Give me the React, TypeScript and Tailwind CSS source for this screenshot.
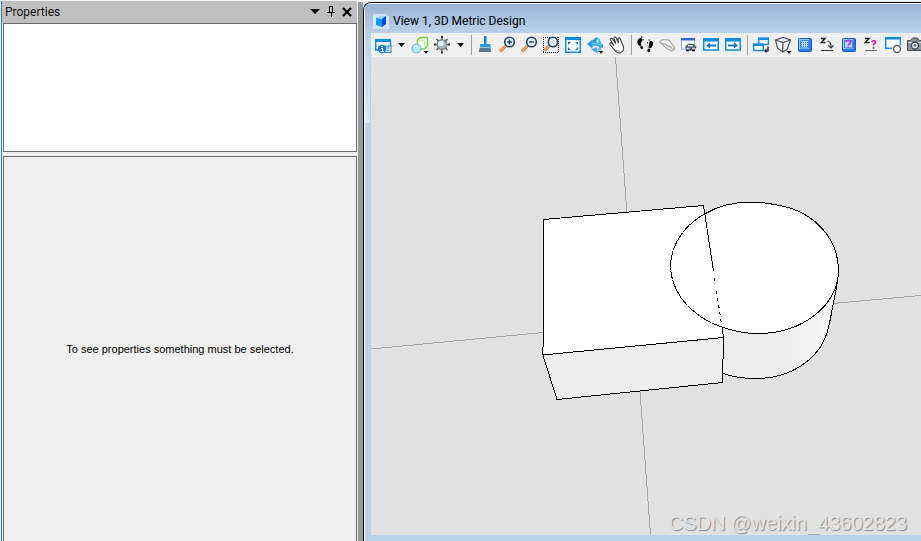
import React from 'react';

interface IconButtonProps {
  label: string;
  children: React.ReactNode;
}

const BLUE = '#0a8ce0';

const IconButton: React.FC<IconButtonProps> = ({ label, children }) => (
  <button type="button" aria-label={label} title={label} className="flex h-6 w-[22px] shrink-0 items-center justify-center">
    <svg width="18" height="18" viewBox="0 0 18 18" fill="none">
      {children}
    </svg>
  </button>
);

const DropButton: React.FC<{ label: string }> = ({ label }) => (
  <button type="button" aria-label={label} className="flex h-6 w-[15px] shrink-0 items-center justify-center">
    <svg width="7" height="4" viewBox="0 0 7 4">
      <path d="M0 0h7L3.500 4z" fill="#000" />
    </svg>
  </button>
);

const Separator = () => (
  <div className="flex h-6 w-1.5 shrink-0 items-center justify-center">
    <div className="h-5 w-px bg-[#a0a0a0]" />
  </div>
);

const CornerArrow = () => <path d="M12.500 15h5L15 17.700z" fill="#000" />;

const Lens: React.FC<{ cx: number; cy: number }> = ({ cx, cy }) => (
  <>
    <path d={`M${cx - 4} ${cy + 4}L${cx - 9.5} ${cy + 9.5}`} stroke="#c9752c" strokeWidth="3" />
    <path d={`M${cx - 4} ${cy + 4}L${cx - 9.5} ${cy + 9.5}`} stroke="#f9ae62" strokeWidth="1.500" />
    <circle cx={cx} cy={cy} r="4.800" fill="#e2f1fa" stroke="#1d4562" strokeWidth="1.600" />
  </>
);

const WindowFrame = () => (
  <>
    <rect x="1.750" y="3" width="14.500" height="11" fill="#fff" stroke={BLUE} strokeWidth="1.500" />
    <path d="M1 2h16v3.500H1z" fill={BLUE} />
  </>
);

const BlueTile = () => (
  <>
    <rect x="2.500" y="2.500" width="13" height="13" rx="1" fill="#2f7de8" stroke="#1a56cf" />
    <path d="M3 3h10v10H3z" fill="#8fd0fb" />
    <path d="M4.500 4.500h8v7.500h-8z" fill="#b4e0fc" stroke="#3c86e6" />
  </>
);

const ViewToolbar = () => (
  <div role="toolbar" aria-label="View tools" className="flex h-6 items-center overflow-hidden bg-[#f0f0f0] pl-px">
    <IconButton label="View Attributes">
      <path d="M1 3h16v3H1z" fill={BLUE} />
      <path d="M2.500 6h13v7h-13z" fill="#f8f8f8" />
      <path d="M1.700 5v9H4M16.500 5v5" stroke={BLUE} strokeWidth="1.400" />
      <rect x="10.500" y="10" width="6.500" height="6.500" fill="#e5f4ff" stroke="#1a86d2" />
      <path d="M12.500 12h3M12.500 14.300h3" stroke="#1a86d2" />
      <circle cx="8" cy="13" r="4.200" fill="#147cc9" />
      <path d="M7 10.500h2M7 12.500h1.500v3M6.500 15.500h3.500" stroke="#fff" strokeWidth="1.200" />
    </IconButton>
    <DropButton label="View Attributes options" />
    <IconButton label="Display Style">
      <path d="M6.500 4l3-2.500h7v8.500l-3 3h-7z" fill="#f4fbee" stroke="#80c83c" strokeWidth="1.400" />
      <path d="M7.500 4.500h6M13.500 12.500V4.500" stroke="#cdebb1" strokeWidth="1.200" />
      <circle cx="5.500" cy="12.500" r="4.500" fill="#b9e8fa" stroke="#56b5dd" />
      <circle cx="4.500" cy="11" r="1.800" fill="#eefaff" />
      <CornerArrow />
    </IconButton>
    <IconButton label="Adjust View Brightness">
      <path d="M9 0v17M1 8.500h16M3.500 3l11 11M14.500 3l-11 11" stroke="#4b4f52" strokeWidth="1.200" />
      <circle cx="9" cy="8.500" r="4.900" fill="#a9bdc5" stroke="#747e83" strokeWidth="1.200" />
      <circle cx="8" cy="7.500" r="2.600" fill="#e4f7fb" />
      <path d="M8 15.500h2v2H8zM8 0h2v2H8zM1 7.500h2v2H1zM15 7.500h2v2h-2z" fill="#303234" />
    </IconButton>
    <DropButton label="Brightness options" />
    <Separator />
    <IconButton label="Update View">
      <path d="M8 0h2.500v8H8z" fill="#1b83cf" />
      <path d="M4 8h10.500v4H4z" fill="#279bdf" />
      <path d="M4 11h10.500l.5 5H2.500z" fill="#55798e" />
      <path d="M4 11.500h10" stroke="#9bc6dd" />
    </IconButton>
    <IconButton label="Zoom In">
      <Lens cx={11.5} cy={6} />
      <path d="M9 6h5M11.500 3.500v5" stroke="#1d4562" strokeWidth="1.400" />
    </IconButton>
    <IconButton label="Zoom Out">
      <Lens cx={11.5} cy={6} />
      <path d="M9 6h5" stroke="#1d4562" strokeWidth="1.400" />
    </IconButton>
    <IconButton label="Window Area">
      <path d="M1.500 1v16M16.500 1v16M1 1.500h16M1 16.500h16" stroke="#000" strokeDasharray="1 1" />
      <path d="M7.500 9.500L2.500 14.500" stroke="#c9752c" strokeWidth="3" />
      <path d="M7.500 9.500L2.500 14.500" stroke="#f9ae62" strokeWidth="1.500" />
      <circle cx="11" cy="6" r="4.700" fill="#e2f1fa" stroke="#1d4562" strokeWidth="1.600" />
    </IconButton>
    <IconButton label="Fit View">
      <rect x="1.750" y="1.750" width="14.500" height="14.500" fill="#f8fcff" stroke={BLUE} strokeWidth="1.500" />
      <path d="M1 1h16v3H1z" fill={BLUE} />
      <path d="M4 6h3L4 9zM14 6v3l-3-3zM4 14v-3l3 3zM14 14h-3l3-3z" fill="#2c78ae" />
    </IconButton>
    <IconButton label="Rotate View">
      <path d="M10 2.500c4.500 0 6 11 1 13" stroke="#56bdf3" strokeWidth="2.500" />
      <path d="M6 5l4.500-4v7z" fill="#2693dc" />
      <path d="M1 8l5.500-4.500v2.700c4 0 7 .3 10.500 2.300v3.500c-3-2-6.500-2.500-10.500-2.300v3z" fill="#1f9be6" />
      <path d="M5.500 7.800c4-.5 7 0 10 1.500" stroke="#9cdcfb" />
      <path d="M5 13.500l6-2.500v6z" fill="#3fb0ef" />
      <CornerArrow />
    </IconButton>
    <IconButton label="Pan View">
      <path d="M6.500 14L2 8.500c-.8-1.500 1-2.200 2-1l2 2L2.500 4c-.7-1.500 1.200-2.300 2-1L8 8 6 2.500c-.3-1.700 1.700-2 2.300-.5L10.500 7 10 3c0-1.500 2-1.500 2.300 0L15 9.500c.8 2 1.200 4-.3 5.700L12.500 17c-2 0-4.500-1-6-3z" fill="#fff" stroke="#3e3e3e" strokeWidth="1.100" />
      <path d="M8 14l4 1.500" stroke="#999" />
    </IconButton>
    <Separator />
    <IconButton label="Walk">
      <path d="M3 2.500c2-1.500 3.500 0 3 2L5 7.500l.5 2-2 .5C1 8 .500 4.500 3 2.500zM4 10.500l2.200-.500 1 2c-.5 1.500-2.200 1.500-2.700 0z" fill="#000" />
      <path d="M13.500 5.500c2-1.200 3.500 0 3.500 2 0 2-1 4-2.500 4.700l-2-.6.300-2.200zM12 12.500l2.300.6-.5 2.500c-1 1.500-2.800.5-2.500-1z" fill="#000" />
      <path d="M5 1h1.500M7 3v1.500M12.500 4H14M11.500 6v1.500" stroke="#000" />
    </IconButton>
    <IconButton label="Fly">
      <path d="M1.500 6L4 3.700 11 4l5 6.500.5 3-3 1.500-5-2.500z" fill="#dcdcdc" stroke="#9b9b9b" />
      <path d="M2 6.500l8 3 6 4" stroke="#a9a9a9" />
      <path d="M4.500 4.500l6 .3 4 5-5-1.500-6-2z" fill="#f4f4f4" />
    </IconButton>
    <IconButton label="Navigate View">
      <rect x="1.500" y="2.500" width="13" height="10.500" fill="#f8fbff" stroke="#8ba6e0" />
      <path d="M1 2h14v2.500H1z" fill="#2f66d2" />
      <path d="M5 11l3.500-3.500 5 .5 3 3-2 3.500H7z" fill="#4c555d" />
      <path d="M8 9.500l5 .5M6.500 12.500h3M12 12.500h3" stroke="#dce5ec" strokeWidth="1.400" />
      <path d="M6 14.500h3M12 14.500h3" stroke="#111" strokeWidth="1.500" />
    </IconButton>
    <IconButton label="View Previous">
      <WindowFrame />
      <path d="M4 9.500l4-3v2h6v2H8v2z" fill="#1676b8" />
    </IconButton>
    <IconButton label="View Next">
      <WindowFrame />
      <path d="M14 9.500l-4-3v2H4v2h6v2z" fill="#1676b8" />
    </IconButton>
    <Separator />
    <IconButton label="Copy View">
      <rect x="6.700" y="2.500" width="9.600" height="6" fill="#fff" stroke={BLUE} strokeWidth="1.400" />
      <path d="M6 1.500h11V4H6z" fill={BLUE} />
      <rect x="1.700" y="8.500" width="9.600" height="6" fill="#fff" stroke={BLUE} strokeWidth="1.400" />
      <path d="M1 7.500h11V10H1z" fill={BLUE} />
      <path d="M16 10.500V15h-2" stroke="#000" strokeWidth="1.200" />
      <path d="M14.500 12.500v4.500L12 14.700z" fill="#000" />
    </IconButton>
    <IconButton label="View Orientation">
      <path d="M1.500 4L9 1.500 16.500 4 13 13.500 8.500 16 3.500 12z" fill="#f1f1f1" stroke="#50555a" strokeWidth="1.300" />
      <path d="M1.500 4L9 6.500 16.500 4M9 6.500L8.500 16" stroke="#50555a" strokeWidth="1.300" />
      <CornerArrow />
    </IconButton>
    <IconButton label="Set Active Depth">
      <BlueTile />
      <path d="M5 6.500h7M5 8.500h7M5 10.500h7" stroke="#2a5fc4" strokeDasharray="1 1" />
    </IconButton>
    <IconButton label="Set Display Depth">
      <path d="M3 2.500h4L3.300 6.500H7.500" stroke="#222" strokeWidth="1.400" />
      <path d="M9.500 5c3 .5 3.500 3 3.500 5.500M10.500 9.500l2.500 2.500 2.500-2.500M3 14.500h12" stroke="#333" strokeWidth="1.200" />
    </IconButton>
    <IconButton label="Show Active Depth">
      <BlueTile />
      <path d="M6 6c.5-2.200 5.500-1.500 4.500.8-.5 1.300-2.200 1.200-2.200 2.700M8.300 10.500V12" stroke="#c22fd0" strokeWidth="1.700" />
    </IconButton>
    <IconButton label="Show Display Depth">
      <path d="M3 2.500h4L3.300 6.500H7.500" stroke="#222" strokeWidth="1.400" />
      <path d="M3 14.500h12" stroke="#666" />
      <path d="M9.800 6c.5-1.800 4.500-1.500 3.700.8-.4 1.200-2 1.200-2 2.700M11.500 11v1.700" stroke="#d119ae" strokeWidth="1.600" />
    </IconButton>
    <IconButton label="Clip Volume">
      <rect x="1.700" y="1.750" width="14.600" height="10.500" fill="#fff" stroke={BLUE} strokeWidth="1.400" />
      <path d="M1 1h16v2.500H1z" fill={BLUE} />
      <circle cx="13" cy="13" r="5" fill="#f0f0f0" />
      <circle cx="13" cy="13" r="3.500" fill="#fff" stroke="#555b60" strokeWidth="1.400" />
    </IconButton>
    <IconButton label="Saved Views">
      <path d="M1.500 4.500h3l2-2.500h5l2 2.500h3v10h-15z" fill="#8b949b" stroke="#42494f" />
      <path d="M2 6.500h14" stroke="#d4dade" />
      <circle cx="9" cy="9.500" r="3.500" fill="#dfe9f0" stroke="#3d4449" strokeWidth="1.300" />
      <circle cx="9" cy="9.500" r="1.400" fill="#6a7f8e" />
    </IconButton>
  </div>
);

// Drawn in window coordinates, the origin of the view is 371,57
const Scene = () => (
  <svg className="block" width="550" height="478" viewBox="371 57 550 478" fill="none" role="img" aria-label="Box and cylinder">
    <defs>
      <linearGradient id="side" x1="723" x2="838" y1="0" y2="0" gradientUnits="userSpaceOnUse">
        <stop offset="0" stopColor="#ececec" />
        <stop offset="0.400" stopColor="#ededed" />
        <stop offset="0.800" stopColor="#f3f3f3" />
        <stop offset="1" stopColor="#fbfbfb" />
      </linearGradient>
    </defs>
    <path d="M615.500 57L650.500 535M371 349L543 332.500M833 303.500L921 295.500" stroke="#a6a6a6" shapeRendering="crispEdges" />
    <path
      d="M838.500 272C838 282 836 290 834 300C831 315 830 323 827 333C818 360 790 378.500 757 378.500C744 378.500 732 377 723 373.500V320z"
      fill="url(#side)"
    />
    <path d="M543.500 219.500L703.500 205.500L723.500 337.500L543 355z" fill="#fff" />
    <path d="M543 355L723.500 337.500L722.500 382.500L557 399.500z" fill="#eee" />
    <ellipse cx="754.700" cy="268" rx="83.900" ry="65.400" transform="rotate(3 754.700 268)" fill="#fff" />
    <g stroke="#000" shapeRendering="crispEdges">
      <path d="M838.500 272C838 282 836 290 834 300C831 315 830 323 827 333C818 360 790 378.500 757 378.500C744 378.500 732 377 723 373.500" />
      <path d="M703.500 205.500L543.500 219.500V340L542.500 355L723.500 337.500L722.500 382.500L557 399.500L543 355.500" />
      <path d="M703.500 205.500L713.500 271" />
      <path d="M714 278V281M716.500 291L722 327" strokeDasharray="3 4" />
      <path d="M722 327L723.500 337.500" />
      <path d="M705 213.700C727 201 753 200 777 205C814 211 838 238 838.500 270C838 306 802 333.500 758 333.500C745 333.500 733 331 722 327" />
      <path d="M705 213.700C683 226 671 246 670.500 266C671 293 692 317 722 327" strokeDasharray="9 1" />
    </g>
  </svg>
);

const PropertiesPanel = () => (
  <aside className="flex w-[356px] shrink-0 flex-col border-l border-[#1c86d1] bg-[#f0f0f0]">
    <header className="flex h-[22px] shrink-0 items-center bg-[#bfbfbf] pr-0.5 pb-px pl-[3px]">
      <h2 className="flex-1 font-[Roboto,sans-serif] text-[12px] leading-4 text-[#111]">Properties</h2>
      <button type="button" aria-label="Window position" className="flex size-4 items-center justify-center">
        <svg width="10" height="5" viewBox="0 0 10 5">
          <path d="M0 0h10L5 5z" fill="#000" />
        </svg>
      </button>
      <button type="button" aria-label="Auto hide" className="flex size-4 items-center justify-center">
        <svg width="8" height="11" viewBox="0 0 8 11" fill="none" shapeRendering="crispEdges">
          <path d="M2.500 6V.500h3V6M0 6.500h8M4.500 7v4M5 1v5" stroke="#000" />
        </svg>
      </button>
      <button type="button" aria-label="Close" className="flex size-4 items-center justify-center">
        <svg width="10" height="10" viewBox="0 0 10 10" fill="none">
          <path d="M1 1l8 8M9 1L1 9" stroke="#000" strokeWidth="2.200" />
        </svg>
      </button>
    </header>
    <div className="ml-px h-[129px] shrink-0 border border-[#6b6b6b] bg-white" />
    <div className="mt-1 ml-px flex flex-1 items-center justify-center border border-b-0 border-[#6b6b6b] font-['Liberation_Sans',sans-serif] text-[11px] leading-4 text-black">
      <p>To see properties something must be selected.</p>
    </div>
  </aside>
);

const ViewWindow = () => (
  <main className="mt-px flex min-w-0 flex-1 flex-col overflow-hidden rounded-tl-lg border-t border-l border-black bg-[#b9d1ea]">
    <header className="flex h-[30px] shrink-0 items-center gap-1 border-t border-l border-white bg-linear-to-b from-[#98b3d3] to-[#b9d1ea] pt-1 pl-2">
      <svg width="16" height="16" viewBox="0 0 16 16">
        <path d="M0 1h13l3 3v12H0z" fill="#d5e5f6" />
        <path d="M3 5l3-2h7l-3 2.500z" fill="#8de0ff" />
        <path d="M3 5l6 1v8l-6-2z" fill="#0a9cff" />
        <path d="M9 6l4-3v8l-4 3z" fill="#0645d8" />
      </svg>
      <h1 className="font-[Roboto,sans-serif] text-[12px] leading-4 text-black">View 1, 3D Metric Design</h1>
    </header>
    <div className="flex min-h-0 flex-1">
      <div className="w-[7px] shrink-0 border-l border-white">
        <div className="h-[90px] w-[5px] bg-linear-to-b from-[#b9d1ea] to-[#dce8f6]" />
      </div>
      <div className="mb-1.5 flex min-w-0 flex-1 flex-col">
        <ViewToolbar />
        <div className="relative flex-1 overflow-hidden bg-[#e1e1e1]">
          <Scene />
          <p className="absolute right-3.5 bottom-0 font-['Liberation_Sans',sans-serif] text-[20px] leading-6 text-[#e4e4e4] [text-shadow:1px_1px_1px_#888]">
            CSDN @weixin_43602823
          </p>
        </div>
      </div>
    </div>
  </main>
);

const App: React.FC = () => (
  <div className="flex h-screen overflow-hidden border-t border-[#f1f4f9] bg-[#f0f0f0] pl-px">
    <PropertiesPanel />
    <div className="mt-px ml-px w-[5px] shrink-0 bg-[#8f9aa3]" />
    <ViewWindow />
  </div>
);

export default App;
